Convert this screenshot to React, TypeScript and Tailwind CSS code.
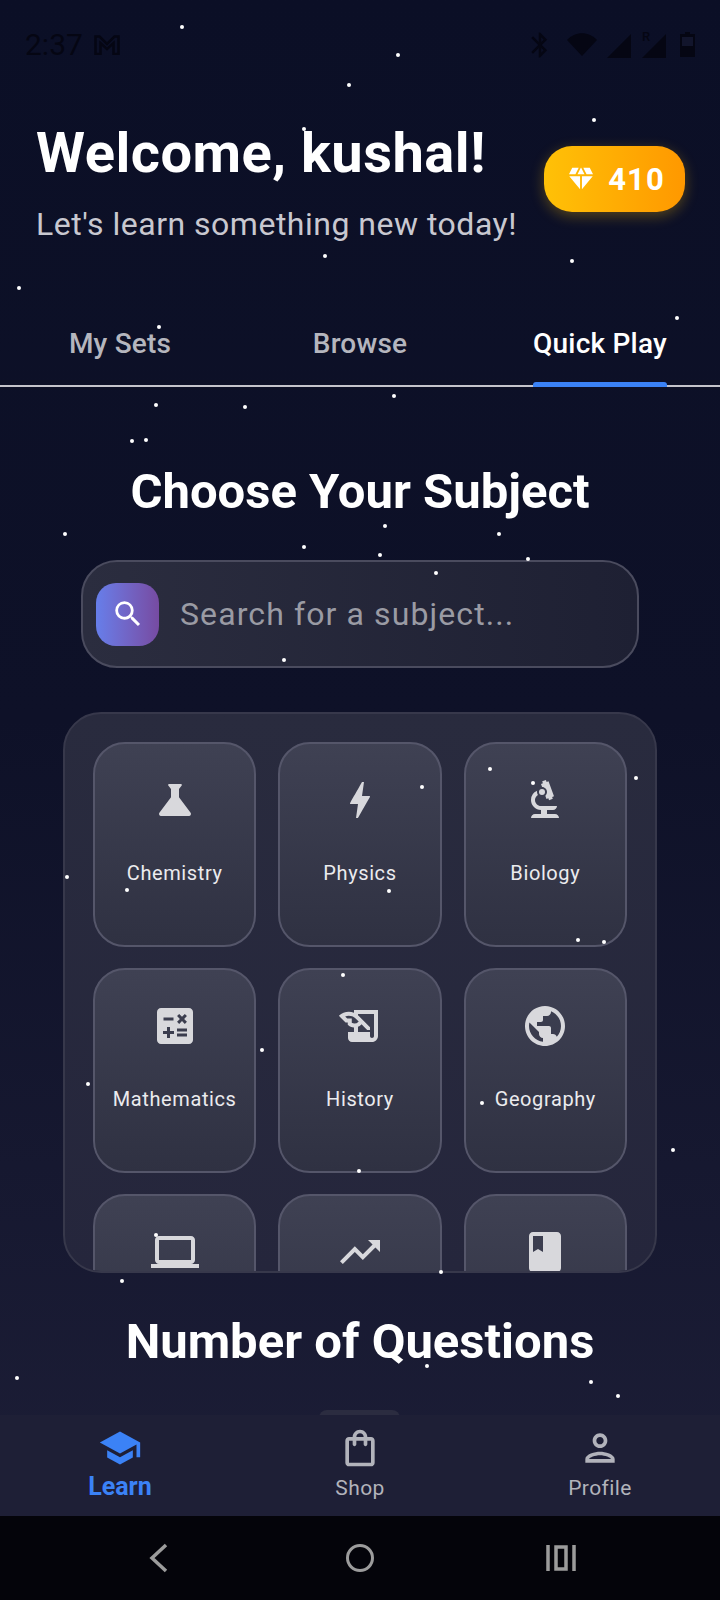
import { IconType } from "react-icons";
import {
  MdBiotech,
  MdBluetooth,
  MdBolt,
  MdBook,
  MdCalculate,
  MdDiamond,
  MdHistoryEdu,
  MdLaptop,
  MdOutlinePerson,
  MdOutlineShoppingBag,
  MdPublic,
  MdSchool,
  MdScience,
  MdSearch,
  MdTrendingUp,
} from "react-icons/md";

const stars = [
  [182, 27], [398, 55], [349, 85], [594, 120], [304, 129], [325, 256], [572, 261], [19, 288],
  [159, 327], [677, 318], [394, 396], [156, 405], [245, 407], [132, 441], [146, 440], [65, 534],
  [385, 526], [499, 534], [304, 547], [380, 555], [528, 559], [436, 573], [284, 660], [422, 787],
  [490, 769], [636, 778], [533, 783], [67, 877], [127, 890], [389, 891], [578, 940], [604, 942],
  [343, 975], [262, 1050], [88, 1084], [482, 1103], [359, 1171], [156, 1235], [122, 1281],
  [441, 1272], [673, 1150], [17, 1378], [427, 1366], [591, 1382], [618, 1396],
];

// the last row is scrolled out of the panel, its labels are not visible
const subjects: { name?: string; icon: IconType }[] = [
  { name: "Chemistry", icon: MdScience },
  { name: "Physics", icon: MdBolt },
  { name: "Biology", icon: MdBiotech },
  { name: "Mathematics", icon: MdCalculate },
  { name: "History", icon: MdHistoryEdu },
  { name: "Geography", icon: MdPublic },
  { icon: MdLaptop },
  { icon: MdTrendingUp },
  { icon: MdBook },
];

function StatusBar() {
  return (
    <div className="flex h-[88px] items-center justify-between pl-[25px] pr-[25px] pt-[1px] text-[#050613]">
      <div className="flex items-center gap-[11px]">
        <span className="text-[30px] leading-none">2:37</span>
        <svg width="26" height="20" viewBox="0 0 26 20" fill="none" stroke="currentColor" strokeWidth="2.5">
          <path d="M1.5 19V1.500h4L13 9l7.500-7.500h4V19h-5V8L13 14 6.500 8v11z" />
        </svg>
      </div>
      <div className="flex items-center">
        <MdBluetooth size={30} className="-ml-[2px]" />
        <svg width="30" height="23" viewBox="0 0 30 23" fill="currentColor" className="ml-[12px]">
          <path d="M0 7C8-2 22-2 30 7L15 23z" />
        </svg>
        <svg width="24" height="24" viewBox="0 0 24 24" fill="currentColor" className="ml-[10px] mt-[2px]">
          <path d="M24 0v24H0z" />
        </svg>
        <svg width="24" height="30" viewBox="0 0 24 30" fill="currentColor" className="ml-[11px] -mt-[4px]">
          <path d="M24 6v24H0z" />
          <text x="0" y="13" fontSize="13" fontWeight="500" fontFamily="Roboto, sans-serif">R</text>
        </svg>
        <svg width="15" height="25" viewBox="0 0 15 25" fill="currentColor" className="ml-[14px]">
          <path d="M5 0h5v2h5v23H0V2h5z" />
          <rect x="2" y="5" width="11" height="9" fill="#12152c" />
        </svg>
      </div>
    </div>
  );
}

function Tabs() {
  return (
    <div className="mt-[65px] flex h-[77px] border-b-2 border-[#c4c4cc] text-[28px] font-medium tracking-[0.2px]">
      <div className="flex flex-1 justify-center pt-[13px] text-[#b5b6be]">My Sets</div>
      <div className="flex flex-1 justify-center pt-[13px] text-[#b5b6be]">Browse</div>
      <div className="relative flex flex-1 justify-center pt-[13px] text-white">
        Quick Play
        <div className="absolute -bottom-[2px] left-[53px] h-[5px] w-[134px] rounded-t-[3px] bg-[#3b82f6]" />
      </div>
    </div>
  );
}

function SubjectCard({ name, icon: Icon }: { name?: string; icon: IconType }) {
  return (
    <div className="flex h-[205px] flex-col items-center rounded-[32px] border-2 border-[#55566a] bg-gradient-to-b from-[#3f4153] to-[#2f3142] pt-[32px]">
      <Icon size={48} className="text-[#d8d8dc]" />
      {name && <span className="mt-[35px] text-[20px] leading-[28px] tracking-[0.6px] text-[#ebebee]">{name}</span>}
    </div>
  );
}

function NavItem({ label, icon: Icon, active }: { label: string; icon: IconType; active?: boolean }) {
  return (
    <div className="flex flex-1 flex-col items-center pt-[11px]">
      <Icon size={44} className={active ? "text-[#3b82f6]" : "text-[#b2b3bb]"} />
      <span
        className={
          active
            ? "mt-[1px] text-[25px] font-bold leading-[32px] text-[#3b82f6]"
            : "mt-[3px] text-[21px] leading-[30px] tracking-[0.4px] text-[#b2b3bb]"
        }
      >
        {label}
      </span>
    </div>
  );
}

export default function App() {
  return (
    <div className="relative flex h-[1600px] w-[720px] flex-col overflow-hidden bg-gradient-to-b from-[#0b0f26] via-[#0e1128] via-45% to-[#1e1f38] font-['Roboto',sans-serif] text-white">
      <div className="h-[1415px] overflow-hidden">
        <StatusBar />

        <div className="flex items-start justify-between pl-[36px] pr-[35px] pt-[32px]">
          <div>
            <h1 className="text-[56px] font-bold leading-[66px] tracking-[0.5px]">Welcome, kushal!</h1>
            <p className="mt-[17px] text-[32px] leading-[42px] tracking-[0.5px] text-[#c8c8d0]">
              Let's learn something new today!
            </p>
          </div>
          <div className="mt-[26px] flex h-[66px] w-[141px] items-center justify-center gap-[12px] rounded-[28px] bg-gradient-to-r from-[#ffc107] to-[#ff9800] pl-[2px] shadow-[0_4px_14px_rgba(255,193,7,0.3)]">
            <MdDiamond size={30} />
            <span className="pt-[2px] text-[31px] font-bold tracking-[1px]">410</span>
          </div>
        </div>

        <Tabs />

        <h2 className="mt-[75px] text-center text-[49px] font-bold leading-[60px]">Choose Your Subject</h2>

        <div className="ml-[81px] mt-[38px] flex h-[108px] w-[558px] items-center gap-[21px] rounded-[36px] border-2 border-[#4a4b5e] bg-gradient-to-r from-[#2b2d3f] to-[#1e2033] pl-[13px]">
          <div className="flex h-[63px] w-[63px] items-center justify-center rounded-[20px] bg-gradient-to-r from-[#667eea] to-[#764ba2]">
            <MdSearch size={34} />
          </div>
          <span className="text-[32px] tracking-[1.1px] text-[#9a9ba4]">Search for a subject...</span>
        </div>

        <div className="ml-[63px] mt-[44px] h-[561px] w-[594px] overflow-hidden rounded-[38px] border-2 border-[#37384b] bg-gradient-to-b from-[#292b3e] to-[#25263c] pl-[28px] pr-[28px] pt-[28px]">
          <div className="grid grid-cols-3 gap-x-[22px] gap-y-[21px]">
            {subjects.map((subject, i) => (
              <SubjectCard key={i} name={subject.name} icon={subject.icon} />
            ))}
          </div>
        </div>

        <h2 className="mt-[39px] text-center text-[49px] font-bold leading-[60px]">Number of Questions</h2>
      </div>

      {stars.map(([x, y]) => (
        <div
          key={`${x}-${y}`}
          className="absolute h-[4px] w-[4px] rounded-full bg-white"
          style={{ left: x - 2, top: y - 2 }}
        />
      ))}

      <div className="absolute left-[319px] top-[1410px] h-[8px] w-[81px] rounded-t-[10px] bg-[#2b2c40]" />

      <div className="relative flex h-[101px] bg-[#1e1f36]">
        <NavItem label="Learn" icon={MdSchool} active />
        <NavItem label="Shop" icon={MdOutlineShoppingBag} />
        <NavItem label="Profile" icon={MdOutlinePerson} />
      </div>

      <div className="flex h-[84px] items-center justify-center bg-[#04040a] text-[#9c9c9c]">
        <div className="flex w-[201px] justify-center">
          <svg width="20" height="30" viewBox="0 0 20 30" fill="none" stroke="currentColor" strokeWidth="3.5">
            <path d="M17 2L3 15l14 13" />
          </svg>
        </div>
        <div className="flex w-[201px] justify-center">
          <div className="h-[28px] w-[28px] rounded-full border-[3.5px] border-[#9c9c9c]" />
        </div>
        <div className="flex w-[201px] justify-center">
          <svg width="30" height="26" viewBox="0 0 30 26" fill="none" stroke="currentColor" strokeWidth="3.5">
            <path d="M2 0v26M28 0v26M10 2h10v22H10z" />
          </svg>
        </div>
      </div>
    </div>
  );
}
